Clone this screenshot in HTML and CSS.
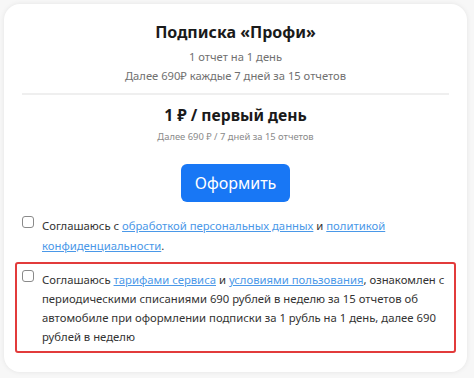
FILE: index.html
```html
<!DOCTYPE HTML>
<html>
	<head>
		<meta charset="utf-8"/>
		<title>Подписка</title>
		<link rel="stylesheet" href="styles.css">
	</head>
	<body>
		<div class="card">
			<h1 class="title">Подписка «Профи»</h1>
			<p class="note">1 отчет на 1 день</p>
			<p class="note">Далее 690₽ каждые 7 дней за 15 отчетов</p>

			<hr class="divider"/>

			<div class="price">1 ₽ / первый день</div>
			<p class="small">Далее 690 ₽ / 7 дней за 15 отчетов</p>

			<div class="actions">
				<button class="btn" type="button">Оформить</button>
			</div>

			<label class="agree">
				<span class="box"></span>
				<span>Соглашаюсь с <a href="#">обработкой персональных данных</a> и <a href="#">политикой конфиденциальности</a>.</span>
			</label>

			<label class="agree agree-error">
				<span class="box"></span>
				<span>Соглашаюсь <a href="#">тарифами сервиса</a> и <a href="#">условиями пользования</a>, ознакомлен с периодическими списаниями 690 рублей в неделю за 15 отчетов об автомобиле при оформлении подписки за 1 рубль на 1 день, далее 690 рублей в неделю</span>
			</label>
		</div>
	</body>
</html>
```

FILE: styles.css
```css
body {
	margin: 0;
	padding: 4px 7px 6px 4px;
	background: #f7f7f7;
	font-family: "Noto Sans", "Open Sans", sans-serif;
	color: #333;
}
.card {
	background: #fff;
	border-radius: 16px;
	box-shadow: 0 0 5px rgba(0, 0, 0, 0.08);
	padding: 16px 11px 19px 11px;
	height: 333px;
}
.title {
	margin: 0;
	font-size: 16px;
	font-weight: 700;
	text-align: center;
	line-height: 24px;
	color: #1a1a1a;
}
.note {
	margin: 0;
	font-size: 11.2px;
	line-height: 19px;
	text-align: center;
	color: #707070;
}
.title + .note {
	margin-top: 3px;
}
.divider {
	border: 0;
	height: 2px;
	background: #efefef;
	margin: 8px 7px 8px;
}
.price {
	font-size: 15.7px;
	font-weight: 700;
	text-align: center;
	line-height: 24px;
	color: #1a1a1a;
}
.small {
	margin: 3px 0 0;
	font-size: 9.4px;
	line-height: 14px;
	text-align: center;
	color: #8a8a8a;
}
.actions {
	display: flex;
	justify-content: center;
	margin-top: 20px;
}
.btn {
	background: #1877f5;
	color: #fff;
	border: 0;
	border-radius: 6px;
	width: 109px;
	height: 38px;
	font-family: inherit;
	font-size: 16px;
	padding: 0;
}
.agree {
	display: flex;
	gap: 8px;
	font-size: 11.3px;
	line-height: 20px;
	padding: 0 7px;
	margin-top: 14px;
}
.agree a {
	color: #4a98e8;
}
.box {
	flex: none;
	width: 10px;
	height: 10px;
	border: 1.5px solid #8a8a8a;
	border-radius: 3px;
}
.agree-error {
	border: 2px solid #e23b3b;
	border-radius: 3px;
	margin-top: 6px;
	padding: 6px 8px 5px 5px;
	line-height: 19px;
}
```
